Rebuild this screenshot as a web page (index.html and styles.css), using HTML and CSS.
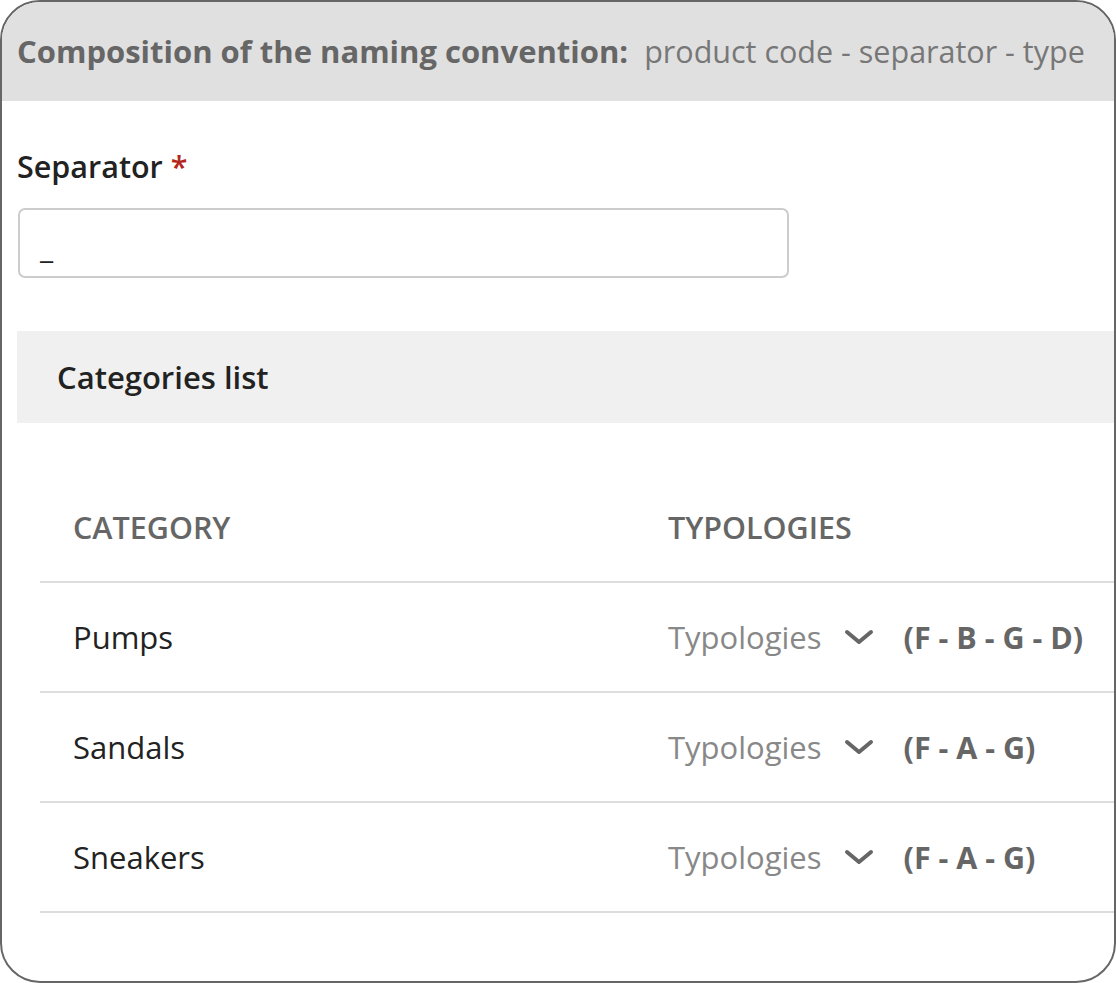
FILE: index.html
```html
<!DOCTYPE html>
<html>
  <head>
    <meta charset="UTF-8">
    <title>Naming convention</title>
    <link rel="stylesheet" href="styles.css">
  </head>
  <body>
    <div class="frame">
      <div class="frameHeader">
        <span class="headerTitle">Composition of the naming convention:</span>
        <span class="headerValue">product code - separator - type</span>
      </div>
      <div class="frameBody">
        <label class="fieldLabel" for="separator">Separator <span class="required">*</span></label>
        <div class="inputBox" id="separator">_</div>

        <div class="panelTitle">Categories list</div>

        <table class="catTable">
          <tr>
            <th class="colCategory">CATEGORY</th>
            <th>TYPOLOGIES</th>
          </tr>
          <tr>
            <td class="colCategory">Pumps</td>
            <td>
              <div class="typo">
                <span class="typoLabel">Typologies</span>
                <svg class="chevron" width="30" height="18" viewBox="0 0 30 18"><path d="M3 4 L15 14 L27 4" fill="none" stroke="#666" stroke-width="4" stroke-linecap="round" stroke-linejoin="round"/></svg>
                <span class="typoCode">(F - B - G - D)</span>
              </div>
            </td>
          </tr>
          <tr>
            <td class="colCategory">Sandals</td>
            <td>
              <div class="typo">
                <span class="typoLabel">Typologies</span>
                <svg class="chevron" width="30" height="18" viewBox="0 0 30 18"><path d="M3 4 L15 14 L27 4" fill="none" stroke="#666" stroke-width="4" stroke-linecap="round" stroke-linejoin="round"/></svg>
                <span class="typoCode">(F - A - G)</span>
              </div>
            </td>
          </tr>
          <tr>
            <td class="colCategory">Sneakers</td>
            <td>
              <div class="typo">
                <span class="typoLabel">Typologies</span>
                <svg class="chevron" width="30" height="18" viewBox="0 0 30 18"><path d="M3 4 L15 14 L27 4" fill="none" stroke="#666" stroke-width="4" stroke-linecap="round" stroke-linejoin="round"/></svg>
                <span class="typoCode">(F - A - G)</span>
              </div>
            </td>
          </tr>
        </table>
      </div>
    </div>
  </body>
</html>
```

FILE: styles.css
```css
html, body {
    margin: 0;
    padding: 0;
    background-color: white;
}
body {
    font-family: "Open Sans", "Liberation Sans", sans-serif;
    font-size: 31px;
    color: #222;
}
.frame {
    box-sizing: border-box;
    width: 1116px;
    height: 983px;
    border: 2px solid #666;
    border-radius: 40px;
    overflow: hidden;
    background-color: white;
}
.frameHeader {
    height: 99px;
    background-color: #e0e0e0;
    display: flex;
    align-items: center;
    padding-left: 15px;
    padding-bottom: 2px;
    box-sizing: border-box;
    white-space: nowrap;
}
.headerTitle {
    font-weight: bold;
    color: #666;
    margin-right: 16px;
}
.headerValue {
    font-size: 30.5px;
    color: #777;
}
.frameBody {
    padding-left: 15px;
}
.fieldLabel {
    display: block;
    margin-top: 44px;
    line-height: 42px;
    font-size: 30.5px;
    font-weight: 600;
    color: #222;
}
.required {
    color: #b3261e;
}
.inputBox {
    box-sizing: border-box;
    width: 771px;
    height: 70px;
    margin-top: 21px;
    margin-left: 1px;
    border: 2px solid #ccc;
    border-radius: 7px;
    padding: 0 20px;
    line-height: 76px;
    font-size: 30px;
    color: #222;
}
.panelTitle {
    margin-top: 53px;
    height: 92px;
    line-height: 92px;
    padding-left: 40px;
    background-color: #f0f0f0;
    font-weight: 600;
    color: #222;
}
.catTable {
    margin-top: 50px;
    margin-left: 23px;
    width: 1100px;
    table-layout: fixed;
    border-collapse: collapse;
}
.catTable th, .catTable td {
    height: 108px;
    padding: 0 0 0 33px;
    text-align: left;
    vertical-align: middle;
    border-bottom: 2px solid #ddd;
}
.catTable th {
    font-size: 30.5px;
    font-weight: 600;
    color: #666;
}
.catTable td {
    color: #222;
}
.colCategory {
    width: 562px;
}
.typo {
    display: flex;
    align-items: center;
    white-space: nowrap;
}
.typoLabel {
    color: #888;
}
.chevron {
    margin-left: 22px;
    margin-right: 30px;
}
.typoCode {
    font-weight: bold;
    color: #666;
    font-size: 30.5px;
}
```
